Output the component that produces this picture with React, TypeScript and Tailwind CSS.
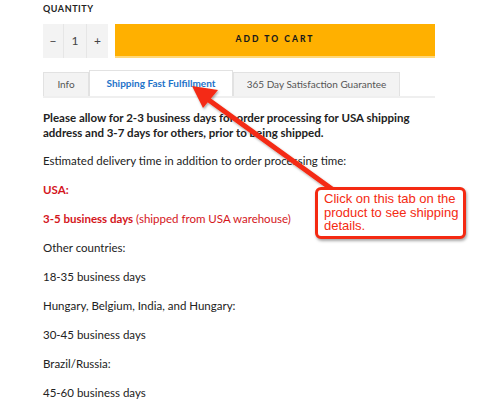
import React from "react";

const body = "font-['Lato',sans-serif]";

function Arrow() {
  return (
    <svg
      className="pointer-events-none absolute left-0 top-0"
      width="480"
      height="415"
      viewBox="0 0 480 415"
    >
      <defs>
        <filter id="sh" x="-20%" y="-20%" width="140%" height="140%">
          <feDropShadow dx="1" dy="1.5" stdDeviation="1.2" floodColor="#000" floodOpacity="0.35" />
        </filter>
      </defs>
      <g filter="url(#sh)">
        <line x1="336" y1="192" x2="206" y2="98" stroke="#f42a12" strokeWidth="5" strokeLinecap="round" />
        <polygon points="192,86 218,90 203,108" fill="#f42a12" />
      </g>
    </svg>
  );
}

export default function App() {
  const lines = [
    "Other countries:",
    "18-35 business days",
    "Hungary, Belgium, India, and Hungary:",
    "30-45 business days",
    "Brazil/Russia:",
    "45-60 business days",
  ];

  return (
    <div className="relative h-[415px] w-[480px] overflow-hidden bg-white">
      <div className={`ml-[43px] w-[392px] ${body}`}>
        <p className="pt-[2px] text-[9px] font-bold uppercase tracking-[0.06em] text-[#222]">Quantity</p>

        <div className="mt-[8px] flex h-[34px] gap-[7px]">
          <div className="flex bg-[#f3f3f3] text-[12px] text-[#444]">
            <span className="flex w-[21px] items-center justify-center border-r border-[#e6e6e6]">−</span>
            <span className="flex w-[23px] items-center justify-center border-r border-[#e6e6e6]">1</span>
            <span className="flex w-[21px] items-center justify-center">+</span>
          </div>
          <button className="flex flex-1 items-center justify-center border-b-2 border-[#ffd87a] bg-[#ffb000] text-[8.5px] font-black uppercase tracking-[0.24em] text-[#1a1a1a]">
            Add to cart
          </button>
        </div>

        <div className="mt-[12px] flex items-end border-b-2 border-[#efefef] text-[10px]">
          <div className="flex h-[24px] w-[46px] items-center justify-center border border-b-0 border-[#e2e2e2] bg-[#f3f3f3] text-[#555]">
            Info
          </div>
          <div className="flex h-[26px] w-[144px] items-center justify-center border border-b-0 border-[#e2e2e2] bg-white font-bold text-[#1d72c9]">
            Shipping Fast Fulfillment
          </div>
          <div className="flex h-[24px] w-[167px] items-center justify-center border border-b-0 border-[#e2e2e2] bg-[#f3f3f3] text-[#555]">
            365 Day Satisfaction Guarantee
          </div>
        </div>

        <div className="mt-[12px] text-[11.5px] leading-[15px] text-[#222]">
          <p className="font-bold">
            Please allow for 2-3 business days for order processing for USA shipping address and 3-7 days for others, prior to being shipped.
          </p>
          <p className="mt-[13px]">Estimated delivery time in addition to order processing time:</p>
          <p className="mt-[14px] font-bold text-[#d4161c]">USA:</p>
          <p className="mt-[14px] text-[#d4161c]">
            <span className="font-bold">3-5 business days</span> (shipped from USA warehouse)
          </p>
          {lines.map((l) => (
            <p key={l} className="mt-[14px]">
              {l}
            </p>
          ))}
        </div>
      </div>

      <Arrow />

      <div className="absolute left-[315px] top-[187px] w-[151px] rounded-[6px] border-[3px] border-[#f42a12] bg-white pb-[3px] pl-[6px] pr-[4px] pt-[2px] font-['Liberation_Sans',sans-serif] text-[13px] leading-[13.5px] text-[#f42a12] shadow-[1px_2px_3px_rgba(0,0,0,0.35)]">
        Click on this tab on the product to see shipping details.
      </div>
    </div>
  );
}
